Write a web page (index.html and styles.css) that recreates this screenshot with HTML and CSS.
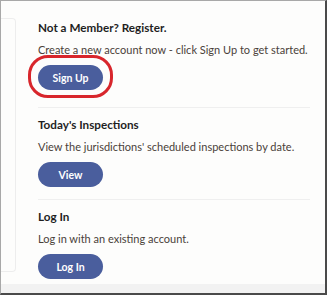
FILE: index.html
```html
<!DOCTYPE html>
<html lang="en">

<head>
    <meta charset="UTF-8">
    <meta name="viewport" content="width=device-width, initial-scale=1.0">
    <title>Account</title>
    <link rel="stylesheet" href="styles.css">
</head>

<body>
    <div class="frame">
        <div class="content-row">
            <div class="side-card"></div>

            <div class="main">
                <div class="section first">
                    <h3>Not a Member? Register.</h3>
                    <p>Create a new account now - click Sign Up to get started.</p>
                    <span class="highlight">
                        <button class="pill-button">Sign Up</button>
                    </span>
                </div>

                <div class="section">
                    <h3>Today's Inspections</h3>
                    <p>View the jurisdictions' scheduled inspections by date.</p>
                    <button class="pill-button">View</button>
                </div>

                <div class="section last">
                    <h3>Log In</h3>
                    <p>Log in with an existing account.</p>
                    <button class="pill-button">Log In</button>
                </div>
            </div>
        </div>
        <div class="bottom-strip"></div>
    </div>
</body>

</html>
```

FILE: styles.css
```css
body {
    margin: 0;
    padding: 0;
    font-family: Lato, "Open Sans", Arial, sans-serif;
    background: #fff;
}

.frame {
    width: 327px;
    height: 295px;
    box-sizing: border-box;
    border-top: 1px solid #a8a8a8;
    border-left: 1px solid #a8a8a8;
    border-right: 2px solid #4a4a4a;
    border-bottom: 2px solid #4a4a4a;
    background-color: #fdfdfc;
    display: flex;
    flex-direction: column;
}

.content-row {
    flex: 1;
    display: flex;
}

.side-card {
    width: 14px;
    margin: 17px 0 12px;
    border: 1px solid #ededed;
    border-left: none;
    border-radius: 0 4px 4px 0;
}

.main {
    width: 272px;
    margin-left: 22px;
}

.section {
    padding: 8px 0 12px;
    border-bottom: 1px solid #efefef;
}

.section.first {
    padding-top: 18px;
    padding-bottom: 17px;
}

.section.last {
    border-bottom: none;
    padding-bottom: 0;
}

.section h3 {
    margin: 0 0 6px;
    font-size: 11.7px;
    line-height: 16px;
    font-weight: 700;
    color: #1f1f1f;
}

.section p {
    margin: 0 0 7px;
    font-size: 11px;
    line-height: 17px;
    color: #4a413a;
    white-space: nowrap;
}

.pill-button {
    display: block;
    width: 65px;
    height: 25px;
    padding: 0;
    border: none;
    border-radius: 13px;
    background-color: #4a5e9d;
    color: #fff;
    font-family: inherit;
    font-size: 10.5px;
    font-weight: 700;
    cursor: pointer;
}

/* red marker drawn round the sign up button */
.highlight {
    position: relative;
    display: inline-block;
    vertical-align: top;
}

.highlight::after {
    content: "";
    position: absolute;
    top: -10px;
    left: -10px;
    right: -10px;
    bottom: -8px;
    border: 3px solid #d8262c;
    border-radius: 20px;
}

.bottom-strip {
    height: 9px;
    background-color: #f2f2f2;
}
```
